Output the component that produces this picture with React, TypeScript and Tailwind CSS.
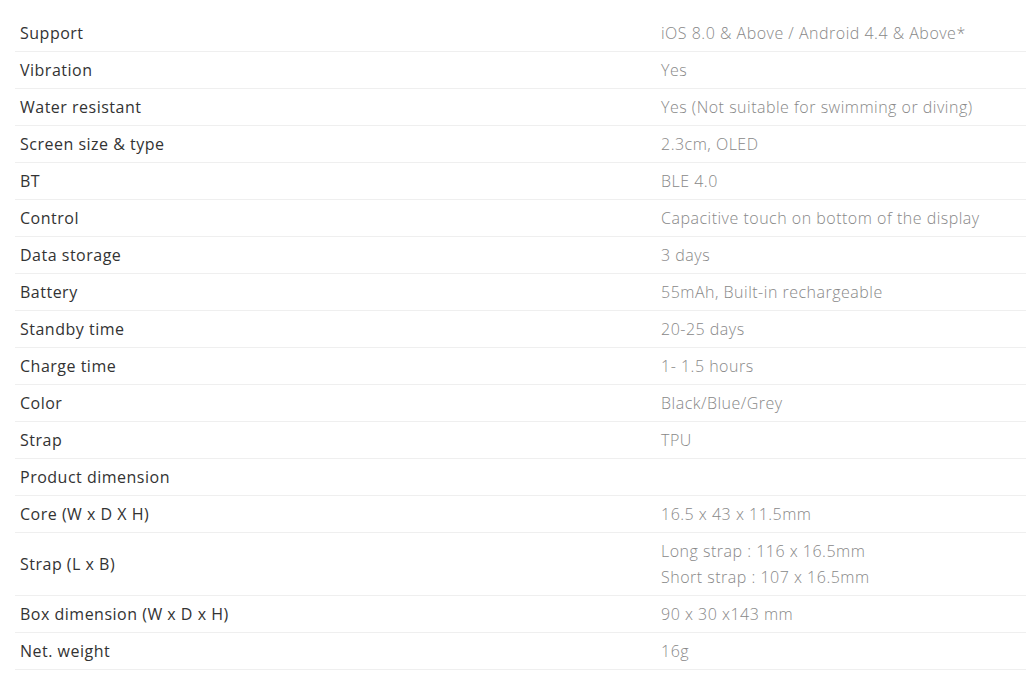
import React from "react";

const rows: [string, string[]][] = [
  ["Support", ["iOS 8.0 & Above / Android 4.4 & Above*"]],
  ["Vibration", ["Yes"]],
  ["Water resistant", ["Yes (Not suitable for swimming or diving)"]],
  ["Screen size & type", ["2.3cm, OLED"]],
  ["BT", ["BLE 4.0"]],
  ["Control", ["Capacitive touch on bottom of the display"]],
  ["Data storage", ["3 days"]],
  ["Battery", ["55mAh, Built-in rechargeable"]],
  ["Standby time", ["20-25 days"]],
  ["Charge time", ["1- 1.5 hours"]],
  ["Color", ["Black/Blue/Grey"]],
  ["Strap", ["TPU"]],
  ["Product dimension", []],
  ["Core (W x D X H)", ["16.5 x 43 x 11.5mm"]],
  ["Strap (L x B)", ["Long strap : 116 x 16.5mm", "Short strap : 107 x 16.5mm"]],
  ["Box dimension (W x D x H)", ["90 x 30 x143 mm"]],
  ["Net. weight", ["16g"]],
];

export default function App() {
  return (
    <div className="min-h-[689px] bg-white pt-[15px] pl-[15px] [font-family:'Open_Sans',sans-serif]">
      <table className="w-[1011px] border-collapse">
        <tbody>
          {rows.map(([k, v], i) => (
            <tr key={i} className="border-b border-[#efefef]">
              <td className="w-[641px] px-[5px] py-[5px] align-middle text-[16px] leading-[26px] tracking-[0.5px] font-medium text-[#333]">
                {k}
              </td>
              <td className="px-[5px] py-[5px] align-middle text-[16px] leading-[26px] tracking-[0.5px] font-light text-[#888]">
                {v.map((line, j) => (
                  <div key={j}>{line}</div>
                ))}
                {v.length === 0 && <div>&nbsp;</div>}
              </td>
            </tr>
          ))}
        </tbody>
      </table>
    </div>
  );
}
